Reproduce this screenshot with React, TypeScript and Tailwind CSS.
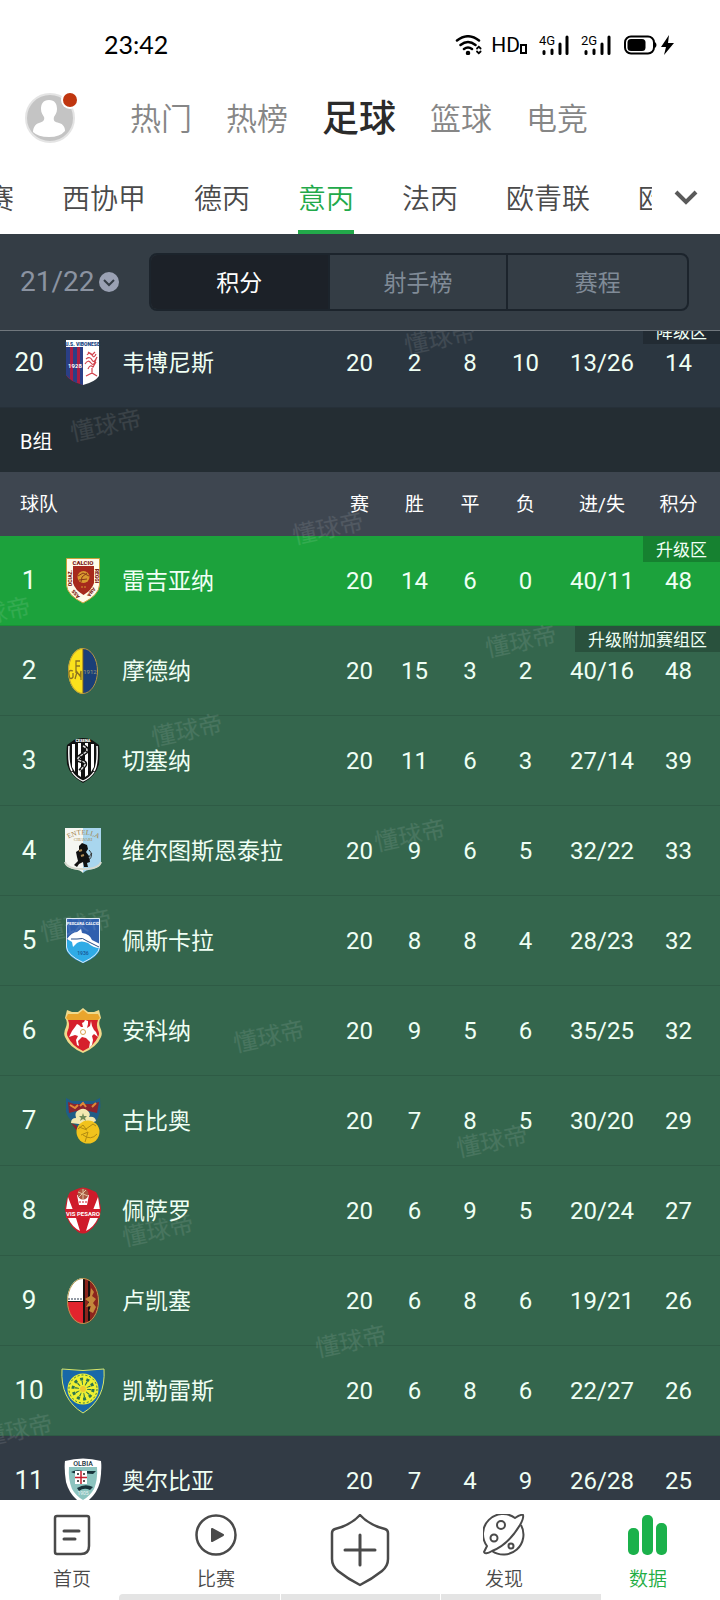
import { ReactNode } from "react";

type Team = {
  rank: number;
  name: string;
  crest: ReactNode;
  stats: string[];
  row: string;
  zone?: string;
};

const Svg = ({ children }: { children: ReactNode }) => (
  <svg viewBox="0 0 48 48" className="mx-auto block h-12 w-12" aria-hidden="true">{children}</svg>
);

const shield = "M7 1H41V30Q41 39 24 46Q7 39 7 30Z";

const Vibonese = () => (
  <Svg>
    <path d="M7 8H24V46Q10 42 7 36Z" fill="#a81d45" />
    <path d="M7 8h4v32l-4-4zM14 8h4v36l-4-2zM21 8h3v38l-3-1z" fill="#2a3f86" />
    <path d="M24 8H40V37Q36 43 24 46Z" fill="#fff" />
    <rect x="7" y="1" width="33" height="7" fill="#fff" />
    <text x="23.500" y="6.500" textAnchor="middle" fontSize="5" fontWeight="900" fill="#143f80" fontFamily="Roboto">U.S. VIBONESE</text>
    <text x="16" y="29" textAnchor="middle" fontSize="6" fontWeight="700" fill="#fff" fontFamily="Roboto">1928</text>
    <path d="M28 16q3-4 5 0t4-1M27 20q4-3 6 1t5-3M26 25q3-5 6-1t5-4M29 30q2-5 5-2l3-5M33 29v6M27 37l6-3 5 3M29 13l4 3 3-3" fill="none" stroke="#d2434d" strokeWidth="1.200" />
  </Svg>
);

const Reggiana = () => (
  <Svg>
    <path d="M7.500 1.500H40.500V28Q40 38 24 46Q8 38 7.500 28Z" fill="#fffbe9" stroke="#c9a13b" />
    <path d="M14 9H35V26Q33 33 24.500 38Q16 33 14 26Z" fill="#a62a1c" />
    <text x="24" y="7.500" textAnchor="middle" fontSize="6" fontWeight="900" fill="#7d2113" fontFamily="Roboto">CALCIO</text>
    <text transform="translate(13 21) rotate(-90)" textAnchor="middle" fontSize="5" fontWeight="900" fill="#7d2113" fontFamily="Roboto">OCIAZ.</text>
    <text transform="translate(18 36) rotate(-128)" textAnchor="middle" fontSize="5" fontWeight="900" fill="#7d2113" fontFamily="Roboto">ASS</text>
    <text transform="translate(36 19) rotate(90)" textAnchor="middle" fontSize="5" fontWeight="900" fill="#7d2113" fontFamily="Roboto">REGGI</text>
    <text transform="translate(31 34) rotate(128)" textAnchor="middle" fontSize="5" fontWeight="900" fill="#7d2113" fontFamily="Roboto">ANA</text>
    <circle cx="24.500" cy="20" r="6" fill="#d99a2f" />
    <path d="M19 19l5-3 6 3M22 25l1-5 5-4M20 23l8-1" fill="none" stroke="#8a3a18" />
    <path d="M22 30h5" stroke="#d99a2f" strokeDasharray="2 1" />
  </Svg>
);

const Modena = () => (
  <Svg>
    <path d="M24 1A15 23 0 0 0 24 47Z" fill="#fbe11c" />
    <path d="M24 1A15 23 0 0 1 24 47Z" fill="#1a3f78" />
    <ellipse cx="24" cy="24" rx="14.500" ry="22.500" fill="none" stroke="#b89a3c" />
    <path d="M24 2v44" stroke="#6e5a2c" />
    <path d="M21 14h-4v12M17 19h4M14 24q-5-2-4 4t4 2v-4M16 32l2-7 3 4 1-5v9" fill="none" stroke="#8c7320" strokeWidth="1.300" />
    <text x="31" y="27" textAnchor="middle" fontSize="6" fill="#9b9a78" fontFamily="Roboto">1912</text>
  </Svg>
);

const Cesena = () => (
  <Svg>
    <path d="M15 3Q24-1 33 3L40 8Q41 14 40 27Q37 39 24 46Q11 39 8 27Q7 14 8 8Z" fill="#111" />
    <path d="M10 9Q9 28 13 34M38 9Q39 28 35 34" fill="none" stroke="#fff" strokeWidth="1.500" />
    <path d="M13 35Q17 41 24 44Q31 41 35 35" fill="none" stroke="#fff" strokeWidth="1.300" />
    <path d="M13 7h3v28l-3-5zM19 6h3v34l-3-2zM26 6h3v32l-3 2zM32 7h3v23l-3 5z" fill="#fff" />
    <path d="M24 9q6 3 3 6l-7 5q-3 3 2 4t4 4l-5 6M27 13l2-3" fill="none" stroke="#111" strokeWidth="4" />
    <path d="M24 9q6 3 3 6l-7 5q-3 3 2 4t4 4l-5 6" fill="none" stroke="#ddd" strokeWidth="1.500" strokeDasharray="3 1" />
    <text x="24" y="5" textAnchor="middle" fontSize="4" fontWeight="900" fill="#fff" fontFamily="Roboto">CESENA</text>
  </Svg>
);

const Entella = () => (
  <Svg>
    <path d="M6 1H24V46Q22 43 14 42Q6 40 6 35Z" fill="#f5f6f1" />
    <path d="M24 1H42V35Q42 40 34 42Q26 43 24 46Z" fill="#a9d6ee" />
    <path d="M6 35Q8 42 24 42Q40 42 42 35" fill="none" stroke="#d5d8cd" strokeWidth="2" />
    <path id="entella-arc" d="M9 12Q24 3 40 12" fill="none" />
    <text fontSize="7" fill="#a07e48" fontFamily="Liberation Serif"><textPath href="#entella-arc" startOffset="50%" textAnchor="middle">ENTELLA</textPath></text>
    <text x="24" y="14" textAnchor="middle" fontSize="4" fill="#a07e48" fontFamily="Liberation Serif">CHIAVARI</text>
    <path d="M20 19l3-3 5 2 1 4-2 3 3 4 1 6-3 1 1 4h-4l-1-5-4 2-2 3-3-2 4-4-1-4-1-5 3-2z" fill="#111" />
    <path d="M20 24l3-1M22 29l3-1" stroke="#ad8a55" strokeWidth="2" />
    <path d="M30 23q5 5 0 10M29 31l4-5" fill="none" stroke="#333" />
  </Svg>
);

const Pescara = () => (
  <Svg>
    <path d={shield} fill="#2f5fae" />
    <path d="M7 24Q18 18 26 24T41 28V30Q41 39 24 46Q7 39 7 30Z" fill="#2fabe6" />
    <path d="M8 22q5-7 10-7l4-3 1 4q8 1 10 7l8 4v4q-7 0-12-5-7-3-11 0l-4 4-1-5z" fill="#fff" />
    <path d="M12 22h6q6-2 10 2l12 6" fill="none" stroke="#274c86" />
    <path d="M7.500 1.500H40.500V30Q40 38 24 45.500Q8 38 7.500 30Z" fill="none" stroke="#dceaf4" />
    <text x="24" y="7.500" textAnchor="middle" fontSize="4" fontWeight="700" fill="#fff" fontFamily="Roboto">PESCARA CALCIO</text>
    <text x="24" y="38" textAnchor="middle" fontSize="5" fontWeight="700" fill="#1b5f9f" fontFamily="Roboto">1936</text>
  </Svg>
);

const Ancona = () => (
  <Svg>
    <path d="M24 1l5 4 6 0 5-2 2 8q-3 3-1 9 3 6 1 10Q38 40 24 46Q10 40 6 30q-2-4 1-10 2-6-1-9l2-8 5 2h6z" fill="#f0d98a" />
    <path d="M24 3l5 4h10l2 4-2 2H9l-2-2 2-4h10z" fill="#e9a52c" />
    <path d="M9 13H39q-2 5 0 10 2 4 0 7-4 9-15 14Q13 39 9 30q-2-3 0-7 2-5 0-10z" fill="#d6202c" />
    <path d="M10 30l3-6 3-4 2-3 2 1 2 2h2l-1-4 2-1 1-2 3 1v3l-1 4 3-2 1-5 1 5 2 4 2 2 2 5-4-3-2 2 1 4-1 5-3 3 1-6-4-4-4-1-4 4 1 5-2-1-1-5 2-4-3-1-3 1z" fill="#fff" />
    <circle cx="24" cy="25" r="2.500" fill="none" stroke="#d8a350" />
  </Svg>
);

const Gubbio = () => (
  <Svg>
    <path d="M7 1l6 3h22l6-3q2 16-5 25l-9 8q-17-8-20-19z" fill="#1f5c87" />
    <path d="M9 5l6 2h18l7-2-2 11q-15-5-28 0z" fill="#8a2430" />
    <path d="M11 8l5 3 3-3M21 9l3-3 3 4M33 10l4-4" fill="none" stroke="#e08a35" strokeWidth="2" />
    <path d="M18 34l-6-8 6 3z" fill="#8a2430" />
    <path d="M12 26q0-5 5-5-2-6 3-8 5-3 9 1 3 3 1 6 6-1 7 4l-9 4z" fill="#f2e8b0" />
    <path d="M24 16l1 3h3l-2 2 1 3-3-2-3 2 1-3-2-2h3z" fill="#718b58" />
    <circle cx="29" cy="35" r="11.500" fill="#f1c31c" />
    <path d="M19 32l5-4 3 4 7-5 3 2M24 38q8 6 14-1M22 38l7-3-3 10M20 30l8 3" fill="none" stroke="#b08a12" />
  </Svg>
);

const Pesaro = () => (
  <Svg>
    <path d="M11 5l7-3q6-3 12 0l7 3q4 6 5 18-2 14-13 22-5 3-10 0Q8 37 6 23 7 11 11 5z" fill="#cf1b2a" />
    <path d="M18 8h12l-2 10h-8zM9 10l5 13H7zM39 10l-5 13h7zM9 31h8l4 13Q13 40 9 31zM39 31h-8l-4 13Q35 40 39 31z" fill="#fff" />
    <path d="M20 15h8" stroke="#cf1b2a" strokeDasharray="2 1" />
    <circle cx="24" cy="7" r="5.500" fill="#a9563f" />
    <path d="M19 5l10 4M20 10l7-7M24 2v10" stroke="#e1c19f" />
    <rect x="7" y="22" width="34" height="9" fill="#d21f2e" />
    <text x="24" y="29" textAnchor="middle" fontSize="6" fontWeight="700" fill="#fff" fontFamily="Roboto">VIS PESARO</text>
  </Svg>
);

const Lucchese = () => (
  <Svg>
    <path d="M24 1A16 23 0 0 0 8 24H24Z" fill="#fff" />
    <path d="M8 24A16 23 0 0 0 24 47V24Z" fill="#e2242d" />
    <path d="M24 1A16 23 0 0 1 24 47Z" fill="#8c241d" />
    <path d="M25 2v44M30 4v40" stroke="#191211" strokeWidth="2" />
    <path d="M9 22h14" stroke="#26364b" strokeDasharray="2 1" />
    <path d="M8 24.500h16" stroke="#191211" />
    <path d="M32 11l3 4-2 4 4 3-3 4 3 4-3 6-4-2 2-5-5 1 3-5-4-3 5-3z" fill="#c4883b" />
    <ellipse cx="24" cy="24" rx="15.500" ry="22.500" fill="none" stroke="#b59a52" />
  </Svg>
);

const Carrarese = () => (
  <Svg>
    <path d="M3 2Q24 5 45 2Q47 32 24 46Q1 32 3 2Z" fill="#1868a8" stroke="#d9e66a" />
    <circle cx="24" cy="22" r="15.500" fill="#eef032" />
    <circle cx="24" cy="22" r="14" fill="none" stroke="#2c7550" strokeDasharray="2 2" />
    <circle cx="24" cy="22" r="10" fill="none" stroke="#2c7550" strokeWidth="3" strokeDasharray="3 3.280" />
    <circle cx="24" cy="22" r="6" fill="none" stroke="#2c7550" strokeWidth="4" strokeDasharray="1 2.770" />
    <circle cx="24" cy="22" r="3" fill="#eec832" />
  </Svg>
);

const Olbia = () => (
  <Svg>
    <path d="M6 4Q24-1 42 4Q43 12 41 25Q37 40 24 47Q11 40 7 25Q5 12 6 4Z" fill="#fff" />
    <path d="M10 10H38Q39 22 35 32Q31 39 24 43Q17 39 13 32Q9 22 10 10Z" fill="#8cc4bf" />
    <path d="M12 15q5-3 12-1h13l-3 3q-8-1-11 0-7 0-11-2zM18 31q8-5 16-1l-3 3q-6-3-11 1z" fill="#18333b" />
    <rect x="16" y="14" width="12" height="13" fill="#fff" />
    <path d="M22 14v13M16 20.500h12" stroke="#c7202e" strokeWidth="1.500" />
    <path d="M18 17h2M24 17h2M18 24h2M24 24h2" stroke="#222" strokeWidth="1.500" />
    <text x="24" y="8.500" textAnchor="middle" fontSize="7" fontWeight="500" fill="#17323a" fontFamily="Roboto">OLBIA</text>
    <text x="24" y="38" textAnchor="middle" fontSize="5" fill="#e6f3f2" fontFamily="Roboto">1905</text>
  </Svg>
);

const playoff = "bg-[#34664d]";

const lastOfGroupA: Team = { rank: 20, name: "韦博尼斯", crest: <Vibonese />, stats: ["20", "2", "8", "10", "13/26", "14"], row: "bg-[#2b3640]", zone: "降级区" };

const groupB: Team[] = [
  { rank: 1, name: "雷吉亚纳", crest: <Reggiana />, stats: ["20", "14", "6", "0", "40/11", "48"], row: "bg-[#1ca23c]", zone: "升级区" },
  { rank: 2, name: "摩德纳", crest: <Modena />, stats: ["20", "15", "3", "2", "40/16", "48"], row: playoff, zone: "升级附加赛组区" },
  { rank: 3, name: "切塞纳", crest: <Cesena />, stats: ["20", "11", "6", "3", "27/14", "39"], row: playoff },
  { rank: 4, name: "维尔图斯恩泰拉", crest: <Entella />, stats: ["20", "9", "6", "5", "32/22", "33"], row: playoff },
  { rank: 5, name: "佩斯卡拉", crest: <Pescara />, stats: ["20", "8", "8", "4", "28/23", "32"], row: playoff },
  { rank: 6, name: "安科纳", crest: <Ancona />, stats: ["20", "9", "5", "6", "35/25", "32"], row: playoff },
  { rank: 7, name: "古比奥", crest: <Gubbio />, stats: ["20", "7", "8", "5", "30/20", "29"], row: playoff },
  { rank: 8, name: "佩萨罗", crest: <Pesaro />, stats: ["20", "6", "9", "5", "20/24", "27"], row: playoff },
  { rank: 9, name: "卢凯塞", crest: <Lucchese />, stats: ["20", "6", "8", "6", "19/21", "26"], row: playoff },
  { rank: 10, name: "凯勒雷斯", crest: <Carrarese />, stats: ["20", "6", "8", "6", "22/27", "26"], row: playoff },
  { rank: 11, name: "奥尔比亚", crest: <Olbia />, stats: ["20", "7", "4", "9", "26/28", "25"], row: "bg-[#323b45]" },
];

const channels = ["热门", "热榜", "足球", "篮球", "电竞"];
const leagues = ["赛", "西协甲", "德丙", "意丙", "法丙", "欧青联", "欧冠"];
const views = ["积分", "射手榜", "赛程"];
const columns = ["赛", "胜", "平", "负", "进/失", "积分"];

// left / top inside the scrolled list
const watermarks = [
  [404, -6], [70, 81], [292, 184], [-41, 269], [485, 297], [151, 386], [374, 491],
  [40, 581], [233, 692], [456, 797], [122, 886], [315, 997], [-19, 1086],
];

const Signal = ({ label }: { label: string }) => (
  <span className="relative block h-5 w-8">
    <span className="absolute -top-[2px] left-0 font-[Roboto] text-[13px] leading-4">{label}</span>
    <svg viewBox="0 0 32 20" className="block h-5 w-8" stroke="#000" strokeWidth="3" strokeLinecap="round" aria-hidden="true">
      <path d="M5 16.500v2M13 15v3.500M21 9v9.500M28 2v16.500" />
    </svg>
  </span>
);

const StatusBar = () => (
  <div className="flex h-[74px] shrink-0 items-center justify-between pt-4 pr-[46px] pl-[104px] text-black">
    <span className="pb-[2px] font-[Lato] text-[25px] leading-8">23:42</span>
    <div className="flex items-center">
      <svg viewBox="0 0 28 20" className="h-5 w-7" fill="none" stroke="#000" strokeWidth="2.500" strokeLinecap="round" aria-hidden="true">
        <path d="M2 5.500Q13-3 24 5.500M5.500 10Q13 4 20.500 10M9 14Q13 11 17 14" />
        <circle cx="13" cy="18" r="1" fill="#000" />
        <path d="M22 13.500l1.800-1.800 1.800 1.800M22 16.500l1.800 1.800 1.800-1.800" strokeWidth="1.800" />
      </svg>
      <span className="ml-2 font-[Roboto] text-[21px] leading-6">HD</span>
      <span className="mt-2 h-[10px] w-[7px] border-2 border-black" />
      <span className="ml-3 flex gap-[10px]">
        <Signal label="4G" />
        <Signal label="2G" />
      </span>
      <svg viewBox="0 0 50 20" className="ml-[11px] h-5 w-[50px]" aria-hidden="true">
        <rect x="1" y="1.500" width="29" height="17" rx="6" fill="none" stroke="#000" strokeWidth="2" />
        <rect x="3.500" y="4" width="18" height="12" rx="3.500" />
        <path d="M31 7q3 3 0 6z" />
        <path d="M45 0L37 12h5l-2 8 10-12h-6z" />
      </svg>
    </div>
  </div>
);

const Channels = () => (
  <header className="flex h-[88px] shrink-0 items-center pl-[25px]">
    <button aria-label="我的" className="relative h-[50px] w-[50px]">
      <svg viewBox="0 0 50 50" className="block" aria-hidden="true">
        <circle cx="25" cy="25" r="24" fill="#c4c4c4" stroke="#e4e4e4" strokeWidth="2" />
        <path d="M24 7c6 0 8 4 8 9 0 4-2 6-3 8-1 4 1 5 5 6 4 1 6 4 6 8q-5 6-16 6T8 39c0-4 2-8 6-9s6-3 5-6c-1-2-3-4-3-8 0-5 2-9 8-9z" fill="#fff" />
      </svg>
      <span className="absolute top-0 -right-[2px] h-[14px] w-[14px] rounded-full bg-[#c0360f] ring-2 ring-white" />
    </button>
    <nav className="ml-[55px] flex items-center gap-[34px] pt-1 leading-[48px]">
      {channels.map((name) => (
        <a key={name} href="#" className={name === "足球" ? "text-[37px] font-medium text-[#2b2b2b]" : "text-[31px] font-[350] text-[#868686]"}>{name}</a>
      ))}
    </nav>
  </header>
);

const Leagues = () => (
  <div className="flex h-[72px] shrink-0">
    <nav className="min-w-0 flex-1 overflow-hidden">
      <ul className="-ml-[14px] flex gap-12 text-[28px] leading-[76px] font-[350] whitespace-nowrap text-[#4a4a4a]">
        {leagues.map((name) => (
          <li key={name} className="shrink-0">
            <a href="#" className={name === "意丙" ? "block h-[72px] border-b-4 border-[#22a94a] text-[#22a94a]" : "block h-[72px]"}>{name}</a>
          </li>
        ))}
      </ul>
    </nav>
    <button aria-label="更多联赛" className="flex w-[68px] items-center justify-center">
      <svg viewBox="0 0 24 16" className="h-4 w-6" fill="none" stroke="#5a5a5a" strokeWidth="4" aria-hidden="true">
        <path d="M2 2l10 10L22 2" />
      </svg>
    </button>
  </div>
);

const Filters = () => (
  <div className="flex h-[97px] shrink-0 items-center border-b border-[#70777d] bg-[#343d45] pr-[31px] pl-5">
    <button className="flex w-[129px] items-center gap-1 font-[Roboto] text-[28px] leading-8 text-[#8b93a1]">
      21/22
      <svg viewBox="0 0 20 20" className="h-5 w-5" aria-hidden="true">
        <circle cx="10" cy="10" r="10" fill="#9aa1b3" />
        <path d="M5 8l5 5 5-5" fill="none" stroke="#343d45" strokeWidth="2" />
      </svg>
    </button>
    <div className="grid h-[58px] flex-1 grid-cols-3 divide-x-2 divide-[#1c242c] overflow-hidden rounded-lg border-2 border-[#1c242c] text-[23px]">
      {views.map((name) => (
        <button key={name} className={name === "积分" ? "bg-[#1c2128] pt-1 text-white" : "pt-1 text-[#808b97]"}>{name}</button>
      ))}
    </div>
  </div>
);

const TeamRow = ({ team }: { team: Team }) => (
  <tr className={`h-[90px] ${team.row} text-[#effff4] [&>td]:border-b [&>td]:border-black/10`}>
    <td className="font-[Roboto] text-[26px]">{team.rank}</td>
    <td>{team.crest}</td>
    <td className="pt-[3px] pl-[14px] text-left text-[23px]">{team.name}</td>
    {team.stats.map((value, i) => (
      <td key={i} className={i === 5 ? "relative pr-[14px] font-[Roboto] text-2xl" : "font-[Roboto] text-2xl"}>
        {value}
        {i === 5 && team.zone && (
          <span className="absolute top-0 right-0 bg-black/20 px-[13px] font-['Noto_Sans_CJK_SC'] text-[17px] leading-[26px] whitespace-nowrap">{team.zone}</span>
        )}
      </td>
    ))}
  </tr>
);

const Standings = () => (
  <main className="relative min-h-0 flex-1 overflow-hidden bg-[#323b45]">
    <table className="-mt-[13px] w-full table-fixed border-separate border-spacing-0 text-center">
      <colgroup>
        <col className="w-[58px]" />
        <col className="w-[50px]" />
        <col />
        <col className="w-[55px]" />
        <col className="w-[55px]" />
        <col className="w-[56px]" />
        <col className="w-[55px]" />
        <col className="w-[98px]" />
        <col className="w-[69px]" />
      </colgroup>
      <tbody>
        <TeamRow team={lastOfGroupA} />
      </tbody>
      <tbody>
        <tr className="h-16 bg-[#242d33] text-left text-xl text-white">
          <th colSpan={9} className="pt-[3px] pl-5 font-normal">B组</th>
        </tr>
        <tr className="h-16 bg-[#3e4650] text-[19px] text-white">
          <th colSpan={3} className="pt-[3px] pl-5 text-left font-normal">球队</th>
          {columns.map((name) => (
            <th key={name} className={name === "积分" ? "pt-[3px] pr-[14px] font-normal" : "pt-[3px] font-normal"}>{name}</th>
          ))}
        </tr>
        {groupB.map((team) => <TeamRow key={team.rank} team={team} />)}
      </tbody>
    </table>
    <div className="pointer-events-none absolute inset-0" aria-hidden="true">
      {watermarks.map(([left, top]) => (
        <span key={top} className="absolute -rotate-12 text-2xl leading-7 whitespace-nowrap text-white/10" style={{ left, top }}>懂球帝</span>
      ))}
    </div>
  </main>
);

const TabBar = () => (
  <footer className="relative h-[100px] shrink-0 bg-white">
    <nav className="grid grid-cols-5 pt-[14px] text-center text-[19px] leading-7 font-[350] text-[#4a4a4a]">
      <a href="#" className="flex flex-col items-center gap-[10px]">
        <svg viewBox="0 0 42 42" className="h-[42px]" fill="none" stroke="#4a4a4a" strokeWidth="2.500" strokeLinecap="round" aria-hidden="true">
          <path d="M6 2h30q2 0 2 2v28q0 8-8 8H6q-2 0-2-2V4q0-2 2-2z" />
          <path d="M13 17h15M13 25h11" strokeWidth="3" />
        </svg>
        首页
      </a>
      <a href="#" className="flex flex-col items-center gap-[10px]">
        <svg viewBox="0 0 42 42" className="h-[42px]" aria-hidden="true">
          <circle cx="21" cy="21" r="19.500" fill="none" stroke="#4a4a4a" strokeWidth="2.500" />
          <path d="M17 15l11 6-11 6z" fill="#4a4a4a" stroke="#4a4a4a" strokeWidth="2" strokeLinejoin="round" />
        </svg>
        比赛
      </a>
      <a href="#" aria-label="发布" className="flex justify-center">
        <svg viewBox="0 0 60 74" className="h-[74px]" fill="none" stroke="#4a4a4a" strokeWidth="2.500" strokeLinejoin="round" aria-hidden="true">
          <path d="M30 1Q21 11 5 15Q2 16 2 19V45Q2 52 8 57Q18 65 30 71Q42 65 52 57Q58 52 58 45V19Q58 16 55 15Q39 11 30 1Z" />
          <path d="M30 21v30M15 36h30" strokeWidth="3" strokeLinecap="round" />
        </svg>
      </a>
      <a href="#" className="flex flex-col items-center gap-[10px]">
        <svg viewBox="0 0 42 42" className="h-[42px]" fill="none" stroke="#4a4a4a" strokeWidth="2" strokeLinejoin="round" aria-hidden="true">
          <path d="M4 32A20 20 0 0 1 32 4Q38 0 40 1Q41 4 37 11Q25 31 9 37Q2 41 1 38Q2 36 4 32Z" />
          <path d="M38 11A20 20 0 0 1 9 37" />
          <circle cx="18" cy="11" r="4" />
          <circle cx="11" cy="24" r="3.500" />
          <circle cx="28" cy="32" r="2.500" />
        </svg>
        发现
      </a>
      <a href="#" className="flex flex-col items-center gap-[10px] text-[#1fae45]">
        <svg viewBox="0 0 42 42" className="h-[42px]" fill="#1bb14b" aria-hidden="true">
          <rect x="1" y="14" width="11" height="27" rx="5" />
          <rect x="15" y="1" width="11" height="40" rx="5" />
          <rect x="29" y="9" width="11" height="32" rx="5" />
        </svg>
        数据
      </a>
    </nav>
    <div className="absolute inset-x-0 bottom-0 flex justify-center gap-px" aria-hidden="true">
      <span className="h-[6px] w-[161px] rounded-tl bg-[#e4e4e4]" />
      <span className="h-[6px] w-[159px] bg-[#e4e4e4]" />
      <span className="h-[6px] w-[160px] bg-[#e4e4e4]" />
    </div>
  </footer>
);

export default function App() {
  return (
    <div className="flex h-screen flex-col overflow-hidden bg-white font-[Roboto,'Noto_Sans_CJK_SC',sans-serif]">
      <StatusBar />
      <Channels />
      <Leagues />
      <Filters />
      <Standings />
      <TabBar />
    </div>
  );
}
